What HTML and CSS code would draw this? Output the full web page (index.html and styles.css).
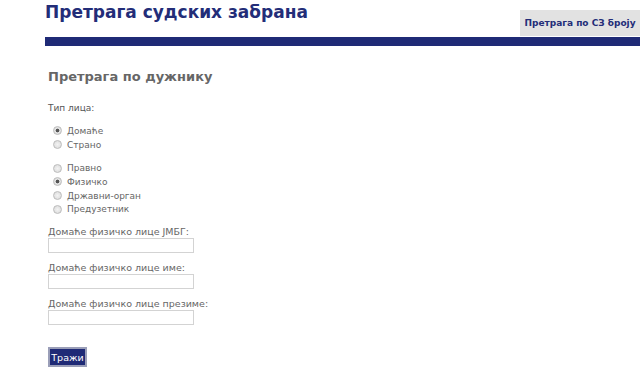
FILE: index.html
```html
<!DOCTYPE html>
<html lang="sr">
<head>
    <meta charset="UTF-8">
    <meta name="viewport" content="width=device-width, initial-scale=1.0">
    <title>Претрага судских забрана</title>
    <link rel="stylesheet" href="styles.css">
</head>
<body>
    <div class="page">
        <div class="header">
            <h1 class="title">Претрага судских забрана</h1>
            <a class="tab" href="#">Претрага по СЗ броју</a>
        </div>
        <div class="bar"></div>

        <form class="search">
            <h2 class="search-title">Претрага по дужнику</h2>

            <p class="caption">Тип лица:</p>

            <div class="group">
                <label class="option"><input type="radio" name="origin" checked> Домаће</label>
                <label class="option"><input type="radio" name="origin"> Страно</label>
            </div>

            <div class="group">
                <label class="option"><input type="radio" name="kind"> Правно</label>
                <label class="option"><input type="radio" name="kind" checked> Физичко</label>
                <label class="option"><input type="radio" name="kind"> Државни-орган</label>
                <label class="option"><input type="radio" name="kind"> Предузетник</label>
            </div>

            <div class="field">
                <label for="jmbg">Домаће физичко лице ЈМБГ:</label>
                <input type="text" id="jmbg">
            </div>
            <div class="field">
                <label for="ime">Домаће физичко лице име:</label>
                <input type="text" id="ime">
            </div>
            <div class="field">
                <label for="prezime">Домаће физичко лице презиме:</label>
                <input type="text" id="prezime">
            </div>

            <button type="button" class="submit">Тражи</button>
        </form>
    </div>
</body>
</html>
```

FILE: styles.css
```css
* {
    margin: 0;
    padding: 0;
    box-sizing: border-box;
}

body {
    background: #fff;
    font-family: "DejaVu Sans", Verdana, sans-serif;
    color: #666;
}

.page {
    padding-left: 45px;
}

.header {
    display: flex;
    justify-content: space-between;
    align-items: flex-end;
    height: 37px;
}

.title {
    align-self: flex-start;
    margin-top: 1px;
    font-size: 17px;
    line-height: 22px;
    font-weight: bold;
    color: #232d78;
}

.tab {
    display: flex;
    align-items: center;
    justify-content: center;
    width: 120px;
    height: 26px;
    margin-bottom: 1px;
    background: #e2e2e2;
    color: #232d78;
    font-size: 9px;
    font-weight: bold;
    text-decoration: none;
}

.bar {
    height: 9px;
    background: #1f2a76;
}

.search {
    padding: 23px 0 0 3px;
}

.search-title {
    font-size: 13px;
    font-weight: bold;
    color: #666;
}

.caption {
    margin-top: 19px;
    font-size: 9px;
    color: #555;
}

.group {
    display: flex;
    flex-direction: column;
    margin-top: 11px;
}

.group + .group {
    margin-top: 10px;
}

.option {
    display: flex;
    align-items: center;
    height: 13.7px;
    padding-left: 5px;
    font-size: 9px;
    color: #666;
}

.option input {
    appearance: none;
    width: 9px;
    height: 9px;
    margin-right: 5px;
    border: 1px solid #bcbcbc;
    border-radius: 50%;
    background: radial-gradient(circle, #f3f3f3 0, #d8d8d8 100%);
}

.option input:checked {
    background: radial-gradient(circle, #555 0, #555 1.6px, #e6e6e6 2.2px, #d8d8d8 100%);
}

.field {
    display: flex;
    flex-direction: column;
    margin-top: 10px;
}

.field + .field {
    margin-top: 9px;
}

.field label {
    font-size: 9.5px;
    line-height: 12px;
    color: #666;
}

.field input {
    width: 146px;
    height: 15px;
    border: 1px solid #d3d3d3;
    background: #fff;
}

.submit {
    display: block;
    margin-top: 22px;
    width: 39px;
    height: 20px;
    border: 2px solid #9a9eb8;
    background: #1f2a76;
    color: #fff;
    font-family: "DejaVu Sans", Verdana, sans-serif;
    font-size: 9.5px;
}
```
